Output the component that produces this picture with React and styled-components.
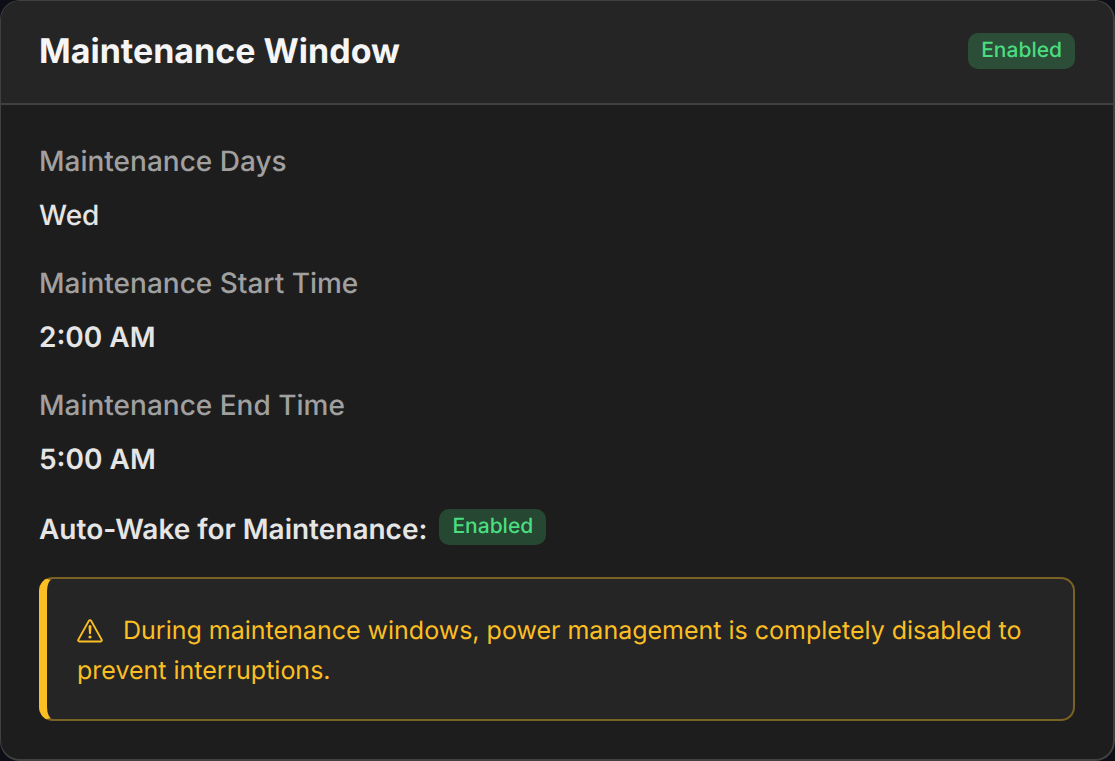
import React from 'react';
import styled, { createGlobalStyle } from 'styled-components';

const fields = [
  { label: 'Maintenance Days', value: 'Wed' },
  { label: 'Maintenance Start Time', value: '2:00 AM', strong: true },
  { label: 'Maintenance End Time', value: '5:00 AM', strong: true },
];

const App = () => {
  return (
    <>
      <GlobalStyle />
      <Card>
        <Header>
          <Title>Maintenance Window</Title>
          <Badge>Enabled</Badge>
        </Header>
        <Body>
          <Fields>
            {fields.map((field) => (
              <Field key={field.label}>
                <Label>{field.label}</Label>
                <Value $strong={field.strong}>{field.value}</Value>
              </Field>
            ))}
          </Fields>
          <AutoWake>
            <AutoWakeText>Auto-Wake for Maintenance:</AutoWakeText>
            <Badge>Enabled</Badge>
          </AutoWake>
          <Alert role="note">
            <WarningIcon viewBox="0 0 26 24" aria-hidden="true">
              <path
                d="M11.9 1.8 1.3 20.7a1.2 1.2 0 0 0 1 1.8h21.4a1.2 1.2 0 0 0 1-1.8L14.1 1.8a1.25 1.25 0 0 0-2.2 0Z"
                fill="none"
                stroke="currentColor"
                strokeWidth="1.8"
                strokeLinejoin="round"
              />
              <path d="M11.5 7.6a1.5 1.5 0 0 1 3 0l-.5 6.6a1 1 0 0 1-2 0Z" fill="currentColor" />
              <circle cx="13" cy="18" r="1.6" fill="currentColor" />
            </WarningIcon>
            During maintenance windows, power management is completely disabled to prevent
            interruptions.
          </Alert>
        </Body>
      </Card>
    </>
  );
};

const GlobalStyle = createGlobalStyle`
  * {
    box-sizing: border-box;
  }

  body {
    margin: 0;
    background: #0e0e16;
    color: #e5e5e5;
    font-family: Inter, sans-serif;
    font-size: 28px;
    line-height: 36px;
    text-rendering: geometricPrecision;
  }
`;

const Card = styled.section`
  overflow: hidden;
  border: 1px solid #404040;
  border-right-width: 2px;
  border-bottom-width: 2px;
  border-radius: 20px;
  background: #1d1d1d;
`;

const Header = styled.header`
  display: flex;
  align-items: flex-start;
  justify-content: space-between;
  padding: 32px 38px 32px;
  border-bottom: 2px solid #404040;
  background: #252525;
`;

const Title = styled.h2`
  margin: 0;
  color: #f5f5f5;
  font-size: 34px;
  font-weight: 700;
  line-height: 38px;
`;

const Badge = styled.span`
  padding: 0 13px 1px;
  border-radius: 10px;
  background: rgba(74, 222, 128, 0.22);
  color: #4ade80;
  font-size: 21px;
  font-weight: 500;
  line-height: 35px;
`;

const Body = styled.div`
  padding: 38px;
`;

const Fields = styled.dl`
  display: flex;
  flex-direction: column;
  gap: 32px;
  margin: 0 0 32px;
`;

const Field = styled.div`
  display: flex;
  flex-direction: column;
  gap: 18px;
`;

const Label = styled.dt`
  color: #a0a0a0;
  font-weight: 500;
`;

const Value = styled.dd`
  margin: 0;
  font-weight: ${(props) => (props.$strong ? 600 : 500)};
`;

const AutoWake = styled.div`
  display: flex;
  align-items: flex-start;
  gap: 12px;
  margin-bottom: 28px;
`;

const AutoWakeText = styled.span`
  font-weight: 600;
  line-height: 40px;
`;

const Alert = styled.p`
  margin: 0;
  padding: 32px 30px 28px;
  border: 2px solid rgba(251, 191, 36, 0.4);
  border-left: 8px solid #fbbf24;
  border-radius: 14px;
  background: #252525;
  color: #fbbf24;
  font-size: 25px;
  line-height: 40px;
`;

const WarningIcon = styled.svg`
  width: 26px;
  height: 24px;
  margin-right: 20px;
  vertical-align: -4px;
`;

export default App;
